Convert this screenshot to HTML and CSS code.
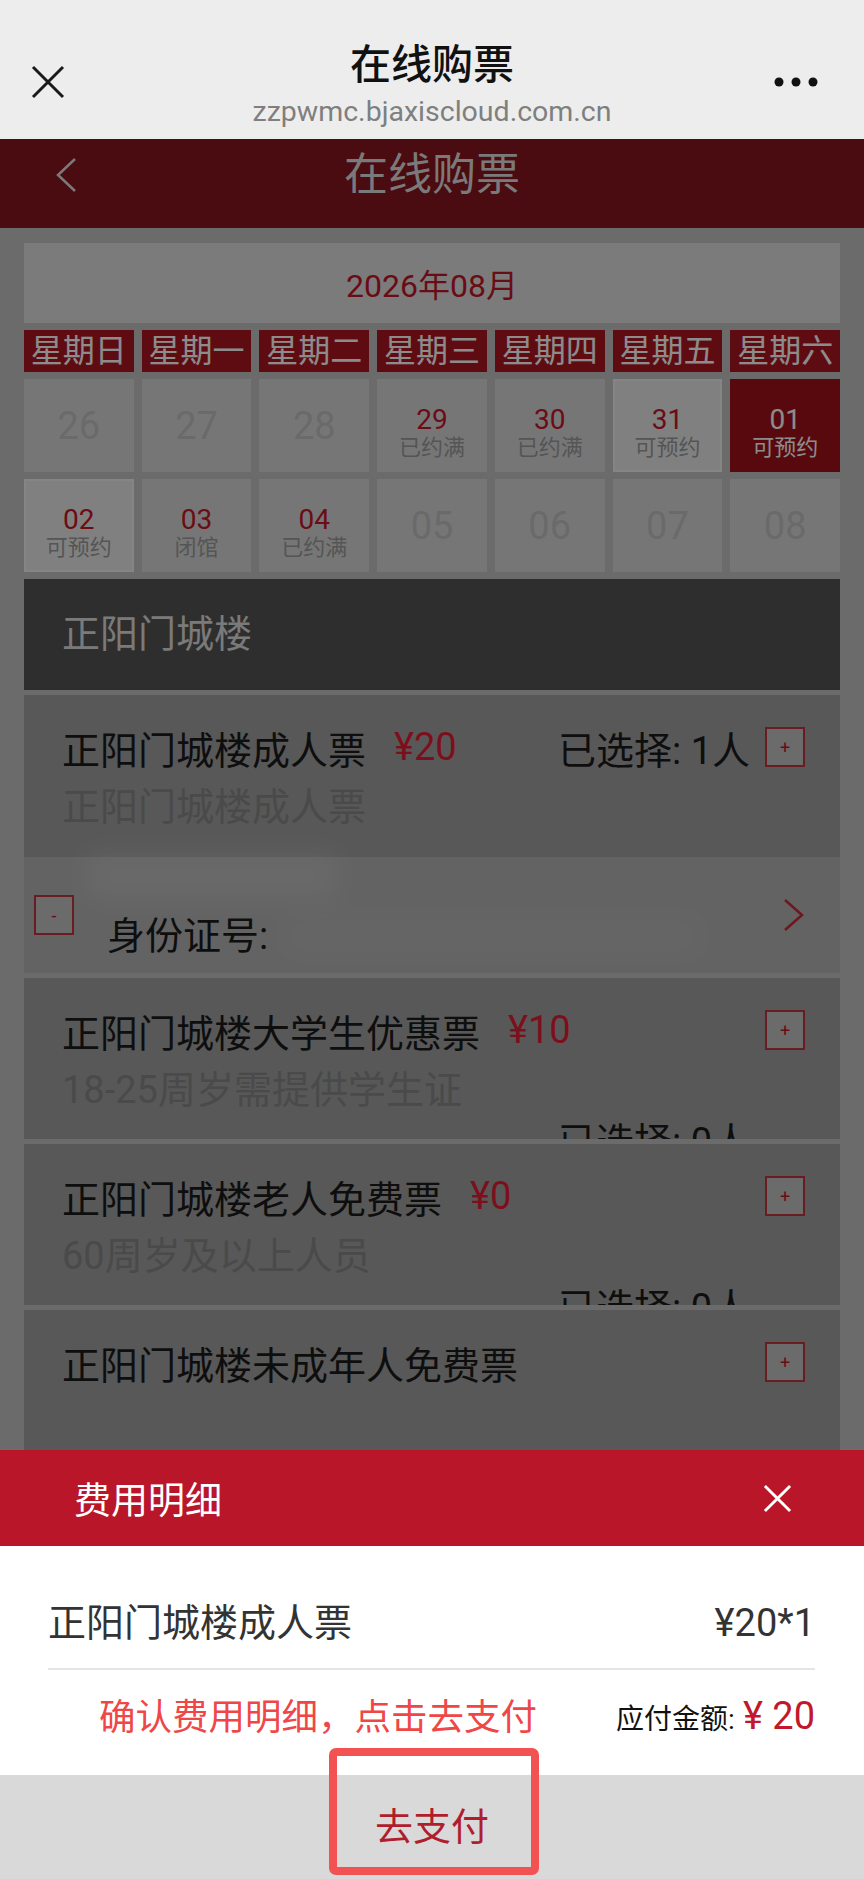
FILE: index.html
```html
<!DOCTYPE html>
<html lang="zh-CN">
<head>
  <meta charset="UTF-8">
  <title>在线购票</title>
  <link rel="stylesheet" href="styles.css">
</head>
<body>
  <div class="wx-bar">
    <svg class="wx-close" viewBox="0 0 34 34"><path d="M2 2L32 32M32 2L2 32"/></svg>
    <div class="wx-title">
      <div class="wx-name">在线购票</div>
      <div class="wx-url">zzpwmc.bjaxiscloud.com.cn</div>
    </div>
    <svg class="wx-more" viewBox="0 0 44 10"><circle cx="5" cy="5" r="4.5"/><circle cx="22" cy="5" r="4.5"/><circle cx="39" cy="5" r="4.5"/></svg>
  </div>

  <div class="page">
    <div class="page-header">
      <svg class="back" viewBox="0 0 24 36"><polyline points="21,2 4,18 21,34"/></svg>
      <h1>在线购票</h1>
      <span></span>
    </div>

    <div class="content">
      <div class="month">2026年08月</div>
      <div class="weekdays">
        <span>星期日</span><span>星期一</span><span>星期二</span><span>星期三</span><span>星期四</span><span>星期五</span><span>星期六</span>
      </div>
      <div class="dates">
        <div class="day off">26</div>
        <div class="day off">27</div>
        <div class="day off">28</div>
        <div class="day"><b>29</b><small>已约满</small></div>
        <div class="day"><b>30</b><small>已约满</small></div>
        <div class="day open"><b>31</b><small>可预约</small></div>
        <div class="day active"><b>01</b><small>可预约</small></div>
        <div class="day open"><b>02</b><small>可预约</small></div>
        <div class="day"><b>03</b><small>闭馆</small></div>
        <div class="day"><b>04</b><small>已约满</small></div>
        <div class="day off">05</div>
        <div class="day off">06</div>
        <div class="day off">07</div>
        <div class="day off">08</div>
      </div>

      <div class="venue">正阳门城楼</div>

      <div class="tickets">
        <div class="ticket-group">
          <div class="ticket">
            <div class="ticket-head">
              <span class="ticket-name">正阳门城楼成人票</span>
              <span class="price">¥20</span>
              <span class="spacer"></span>
              <span class="picked">已选择: 1人</span>
              <span class="qty-btn">+</span>
            </div>
            <div class="ticket-desc">正阳门城楼成人票</div>
          </div>
          <div class="visitor">
            <span class="qty-btn">-</span>
            <div class="visitor-info">
              <div class="visitor-name"><span class="blur"></span></div>
              <div class="visitor-id">身份证号:<span class="blur blur-id"></span></div>
            </div>
            <svg class="more-arrow" viewBox="0 0 22 34"><polyline points="2,2 19,17 2,32"/></svg>
          </div>
        </div>

        <div class="ticket">
          <div class="ticket-head">
            <span class="ticket-name">正阳门城楼大学生优惠票</span>
            <span class="price">¥10</span>
            <span class="spacer"></span>
            <span class="qty-btn">+</span>
          </div>
          <div class="ticket-desc">18-25周岁需提供学生证</div>
          <div class="ticket-picked">已选择: 0人</div>
        </div>

        <div class="ticket">
          <div class="ticket-head">
            <span class="ticket-name">正阳门城楼老人免费票</span>
            <span class="price">¥0</span>
            <span class="spacer"></span>
            <span class="qty-btn">+</span>
          </div>
          <div class="ticket-desc">60周岁及以上人员</div>
          <div class="ticket-picked">已选择: 0人</div>
        </div>

        <div class="ticket">
          <div class="ticket-head">
            <span class="ticket-name">正阳门城楼未成年人免费票</span>
            <span class="spacer"></span>
            <span class="qty-btn">+</span>
          </div>
        </div>
      </div>
    </div>

    <div class="mask"></div>

    <div class="fee-sheet">
      <div class="fee-head">
        <span>费用明细</span>
        <svg class="fee-close" viewBox="0 0 30 30"><path d="M2 2L28 28M28 2L2 28"/></svg>
      </div>
      <div class="fee-body">
        <div class="fee-row">
          <span>正阳门城楼成人票</span>
          <span>¥20*1</span>
        </div>
        <div class="fee-total">
          <span class="fee-tip">确认费用明细，点击去支付</span>
          <span class="fee-amount">应付金额:<em>¥ 20</em></span>
        </div>
      </div>
      <div class="fee-pay">去支付</div>
      <div class="mark"></div>
    </div>
  </div>
</body>
</html>
```

FILE: styles.css
```css
* {
  box-sizing: border-box;
}

html, body {
  margin: 0;
  height: 100%;
}

body {
  display: flex;
  flex-direction: column;
  overflow: hidden;
  font-family: Roboto, "Noto Sans CJK SC", sans-serif;
  background: #c4c4c4;
  color: #1a1a1a;
}

/* WeChat title bar */
.wx-bar {
  flex-shrink: 0;
  height: 139px;
  background: #ededed;
  display: grid;
  grid-template-columns: 1fr auto 1fr;
}

.wx-close {
  width: 34px;
  height: 34px;
  margin: 65px 0 0 31px;
  fill: none;
  stroke: #1a1a1a;
  stroke-width: 3;
}

.wx-title {
  padding-top: 41px;
  text-align: center;
}

.wx-name {
  font-size: 41px;
  line-height: 48px;
  font-weight: 500;
  color: #111;
}

.wx-url {
  margin-top: 7px;
  font-size: 28.5px;
  line-height: 32px;
  color: #7f7f7f;
}

.wx-more {
  justify-self: end;
  width: 44px;
  height: 10px;
  margin: 77px 46px 0 0;
  fill: #111;
}

/* page */
.page {
  flex: 1;
  position: relative;
  overflow: hidden;
}

.page-header {
  height: 89px;
  background: #87141f;
  display: grid;
  grid-template-columns: 1fr auto 1fr;
  align-items: start;
}

.page-header .back {
  width: 24px;
  height: 36px;
  margin: 18px 0 0 54px;
  fill: none;
  stroke: #dedede;
  stroke-width: 2.5;
}

.page-header h1 {
  margin: 11px 0 0;
  font-size: 44px;
  line-height: 50px;
  font-weight: 400;
  color: #dedede;
}

.content {
  padding: 15px 24px 0;
}

.month {
  height: 80px;
  background: #e0e0e0;
  display: flex;
  align-items: center;
  justify-content: center;
  font-size: 32px;
  color: #c01628;
}

.weekdays,
.dates {
  display: grid;
  grid-template-columns: repeat(7, 1fr);
  column-gap: 8px;
  margin-top: 7px;
}

.weekdays span {
  background: #ab1621;
  color: #fff;
  font-size: 32px;
  line-height: 42px;
  text-align: center;
}

.dates {
  grid-auto-rows: 93px;
  row-gap: 7px;
}

.day {
  display: flex;
  flex-direction: column;
  align-items: center;
  justify-content: center;
  padding-top: 15px;
  background: #d8d8d8;
}

.day b {
  font-weight: 400;
  font-size: 28px;
  line-height: 30px;
  color: #c41628;
}

.day small {
  font-size: 22px;
  line-height: 26px;
  color: #9b9b9b;
}

.day.off {
  padding-top: 0;
  font-size: 38px;
  color: #c1c1c1;
}

.day.open {
  background: #eaeaea;
  border: 2px solid #f2f2f2;
}

.day.active {
  background: #a01219;
}

.day.active b,
.day.active small {
  color: #fff;
}

.venue {
  margin-top: 7px;
  height: 111px;
  padding-left: 38px;
  background: #545454;
  color: #dedede;
  font-size: 38px;
  line-height: 111px;
}

/* ticket list */
.tickets {
  display: flex;
  flex-direction: column;
  gap: 5px;
  margin-top: 5px;
}

.ticket {
  height: 161px;
  overflow: hidden;
  padding: 26px 35px 0 38px;
  background: #a0a0a0;
  font-size: 38px;
}

.ticket-group .ticket {
  height: 162px;
}

.ticket-head {
  display: flex;
  align-items: center;
  height: 52px;
  white-space: nowrap;
}

.price {
  margin-left: 28px;
  color: #e31d36;
}

.spacer {
  flex: 1;
}

.picked {
  margin-right: 15px;
}

.qty-btn {
  flex-shrink: 0;
  width: 40px;
  height: 40px;
  display: flex;
  align-items: center;
  justify-content: center;
  border: 2px solid #c0363f;
  background: #c4c4c4;
  color: #c41628;
  font-size: 18px;
}

.ticket-desc {
  margin-top: 8px;
  line-height: 52px;
  color: #878787;
}

.ticket-picked {
  line-height: 52px;
  text-align: right;
  padding-right: 55px;
}

.visitor {
  height: 116px;
  display: flex;
  align-items: center;
  padding: 0 35px 0 10px;
  background: #b4b4b4;
}

.visitor-info {
  flex: 1;
  align-self: stretch;
  margin-left: 33px;
}

.visitor-name {
  height: 40px;
}

.visitor-id {
  display: flex;
  align-items: center;
  margin-top: 13px;
  font-size: 38px;
  line-height: 52px;
}

/* privacy blur over name and id number */
.blur {
  display: inline-block;
  width: 260px;
  height: 50px;
  margin: -6px 0 0 -25px;
  background: rgba(255, 255, 255, 0.16);
  border-radius: 20px;
  filter: blur(14px);
}

.blur-id {
  width: 430px;
  margin: 0 0 0 10px;
  background: rgba(255, 255, 255, 0.07);
}

.more-arrow {
  width: 22px;
  height: 34px;
  fill: none;
  stroke: #c82a38;
  stroke-width: 2.5;
}

/* modal */
.mask {
  position: absolute;
  inset: 0;
  background: rgba(0, 0, 0, 0.45);
}

.fee-sheet {
  position: absolute;
  left: 0;
  right: 0;
  bottom: 0;
  background: #fff;
}

.fee-head {
  height: 96px;
  display: flex;
  align-items: center;
  justify-content: space-between;
  padding: 0 72px 0 74px;
  background: #ba1629;
  color: #fff;
  font-size: 37px;
}

.fee-close {
  width: 29px;
  height: 29px;
  fill: none;
  stroke: #fff;
  stroke-width: 3;
}

.fee-body {
  height: 229px;
  padding: 0 49px 0 48px;
}

.fee-row {
  display: flex;
  justify-content: space-between;
  padding: 50px 0 18px;
  border-bottom: 2px solid #e5e5e5;
  font-size: 38px;
  line-height: 54px;
  color: #333;
}

.fee-total {
  display: flex;
  align-items: center;
  justify-content: space-between;
  margin-top: 19px;
  padding-left: 51px;
  line-height: 54px;
}

.fee-tip {
  font-size: 36.5px;
  color: #ef4747;
}

.fee-amount {
  font-size: 28px;
  color: #111;
}

.fee-amount em {
  margin-left: 8px;
  font-style: normal;
  font-size: 38px;
  color: #c3182b;
}

.fee-pay {
  height: 104px;
  background: #d9d9d9;
  text-align: center;
  line-height: 104px;
  font-size: 38px;
  color: #b01e2d;
}

/* red highlight frame drawn over the pay button */
.mark {
  position: absolute;
  left: 329px;
  top: 298px;
  width: 210px;
  height: 127px;
  border: 8px solid #f25252;
  border-radius: 7px;
}
```
